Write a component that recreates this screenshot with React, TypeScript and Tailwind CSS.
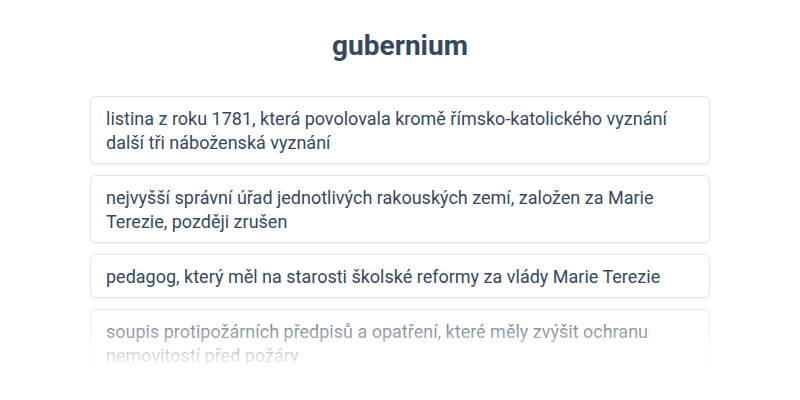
const items = [
  "listina z roku 1781, která povolovala kromě římsko-katolického vyznání další tři náboženská vyznání",
  "nejvyšší správní úřad jednotlivých rakouských zemí, založen za Marie Terezie, později zrušen",
  "pedagog, který měl na starosti školské reformy za vlády Marie Terezie",
  "soupis protipožárních předpisů a opatření, které měly zvýšit ochranu nemovitostí před požáry",
];

export default function App() {
  return (
    <div className="h-[400px] w-[800px] overflow-hidden bg-white font-['Roboto',sans-serif] text-[#34495e]">
      <h1 className="pt-[30px] text-center text-[28px] font-bold leading-8">
        gubernium
      </h1>
      <div className="relative mx-auto mt-[34px] h-[274px] w-[620px] overflow-hidden">
        <ul className="flex flex-col gap-[11px] p-0">
          {items.map((item) => (
            <li
              key={item}
              className="rounded-md border border-[#e2e5ea] bg-white px-[15px] pt-[10px] pb-[8px] text-[18px] leading-6 shadow-[0_1px_3px_rgba(0,0,0,0.08)]"
            >
              {item}
            </li>
          ))}
        </ul>
        <div className="pointer-events-none absolute inset-x-0 bottom-0 h-[70px] bg-gradient-to-b from-white/0 to-white" />
      </div>
    </div>
  );
}
